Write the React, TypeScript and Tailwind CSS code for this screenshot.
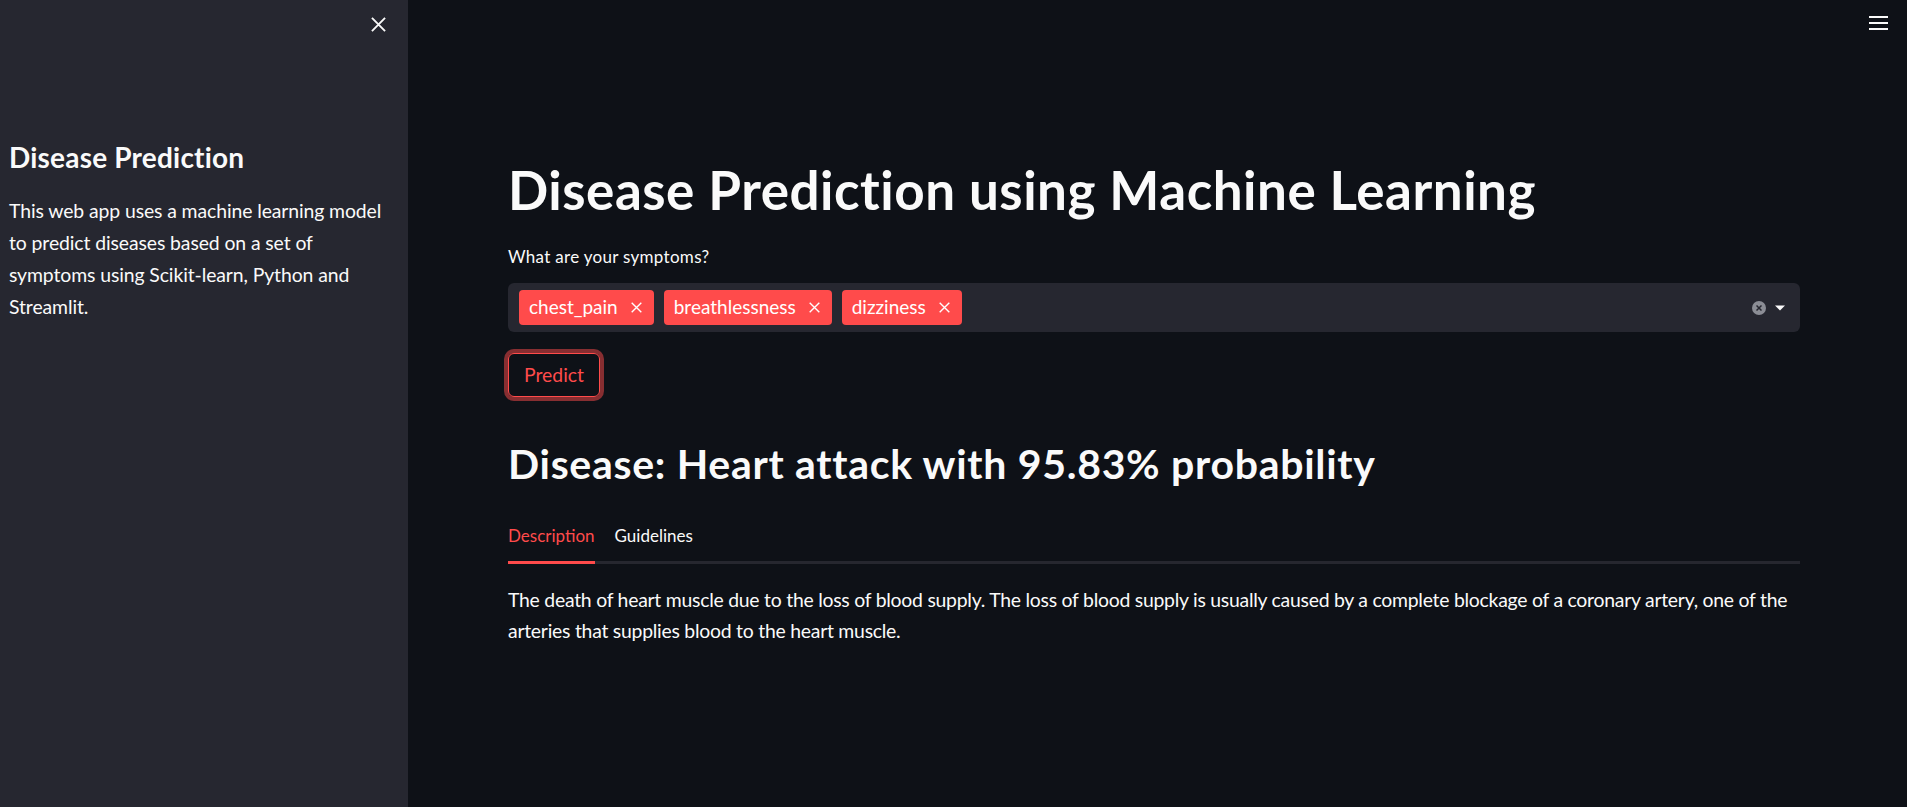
import React, { useState } from 'react'

const symptoms = ['chest_pain', 'breathlessness', 'dizziness']

const CloseIcon = ({ size = 15 }: { size?: number }) => (
  <svg width={size} height={size} viewBox="0 0 16 16" fill="none">
    <path d="M1 1L15 15M15 1L1 15" stroke="currentColor" strokeWidth="2" />
  </svg>
)

const Sidebar = () => {
  return (
    <div className="relative h-screen w-[408px] shrink-0 bg-[#262730] pl-[9px] pr-[20px] text-[#fafafa]">
      <button className="absolute left-[371px] top-[17px] text-[#fafafa]">
        <CloseIcon />
      </button>
      <h2 className="pt-[139px] text-[28px] font-bold leading-[36px] tracking-[0.2px]">
        Disease Prediction
      </h2>
      <p className="mt-[20px] text-[19.4px] leading-[32px] tracking-[-0.1px]">
        This web app uses a machine learning model to predict diseases based on
        a set of symptoms using Scikit-learn, Python and Streamlit.
      </p>
    </div>
  )
}

const App = () => {
  const [tab, setTab] = useState('Description')
  const [selected, setSelected] = useState(symptoms)

  return (
    <div
      className="flex h-screen w-full overflow-hidden bg-[#0e1117]"
      style={{ fontFamily: 'Lato, "Liberation Sans", sans-serif' }}
    >
      <Sidebar />
      <div className="relative flex-1 pl-[100px] pr-[107px] pt-[158px] text-[#fafafa]">
        <button className="absolute right-[19px] top-[16px] flex flex-col gap-[4px]">
          <span className="block h-[2px] w-[19px] bg-[#fafafa]" />
          <span className="block h-[2px] w-[19px] bg-[#fafafa]" />
          <span className="block h-[2px] w-[19px] bg-[#fafafa]" />
        </button>

        <h1 className="text-[53px] font-bold leading-[64px] tracking-[0.5px]">
          Disease Prediction using Machine Learning
        </h1>

        <label className="mt-[23px] block text-[17px] leading-[24px] tracking-[0.3px]">
          What are your symptoms?
        </label>
        <div className="mt-[14px] flex h-[49px] items-center rounded-[6px] bg-[#262730] pl-[11px] pr-[14px]">
          <div className="flex flex-1 gap-[10px]">
            {selected.map((s) => (
              <span
                key={s}
                className="flex h-[35px] items-center gap-[13px] rounded-[4px] bg-[#ff4b4b] pl-[10px] pr-[12px] text-[19px] text-white"
              >
                {s}
                <button onClick={() => setSelected(selected.filter((x) => x !== s))}>
                  <CloseIcon size={11} />
                </button>
              </span>
            ))}
          </div>
          <div className="flex items-center gap-[8px]">
            <span className="flex h-[14px] w-[14px] items-center justify-center rounded-full bg-[#8b8d95] text-[#262730]">
              <svg width="6" height="6" viewBox="0 0 6 6">
                <path d="M0.5 0.5L5.5 5.5M5.5 0.5L0.5 5.5" stroke="currentColor" strokeWidth="1.5" />
              </svg>
            </span>
            <svg width="12" height="6" viewBox="0 0 12 6">
              <path d="M1 0.5H11L6 5.5Z" fill="#fafafa" />
            </svg>
          </div>
        </div>

        <button className="mt-[21px] h-[44px] w-[92px] rounded-[6px] border border-[#ff4b4b] text-[19.4px] text-[#ff4b4b] shadow-[0_0_0_4px_rgba(255,75,75,0.5)]">
          Predict
        </button>

        <h2 className="mt-[41px] text-[41px] font-bold leading-[52px] tracking-[0.7px]">
          Disease: Heart attack with 95.83% probability
        </h2>

        <div className="mt-[34px] flex gap-[20px] border-b-[3px] border-[#26272f]">
          {['Description', 'Guidelines'].map((t) => (
            <button
              key={t}
              onClick={() => setTab(t)}
              className={
                t === tab
                  ? '-mb-[3px] border-b-[3px] border-[#ff4b4b] pb-[13px] text-[17px] leading-[24px] text-[#ff4b4b]'
                  : '-mb-[3px] border-b-[3px] border-transparent pb-[13px] text-[17px] leading-[24px] text-[#fafafa]'
              }
            >
              {t}
            </button>
          ))}
        </div>

        <p className="mt-[20px] text-[19.4px] leading-[31px] tracking-[-0.25px]">
          {tab === 'Description'
            ? 'The death of heart muscle due to the loss of blood supply. The loss of blood supply is usually caused by a complete blockage of a coronary artery, one of the arteries that supplies blood to the heart muscle.'
            : 'Call an ambulance immediately, chew an aspirin if not allergic and rest until help arrives.'}
        </p>
      </div>
    </div>
  )
}

export default App
